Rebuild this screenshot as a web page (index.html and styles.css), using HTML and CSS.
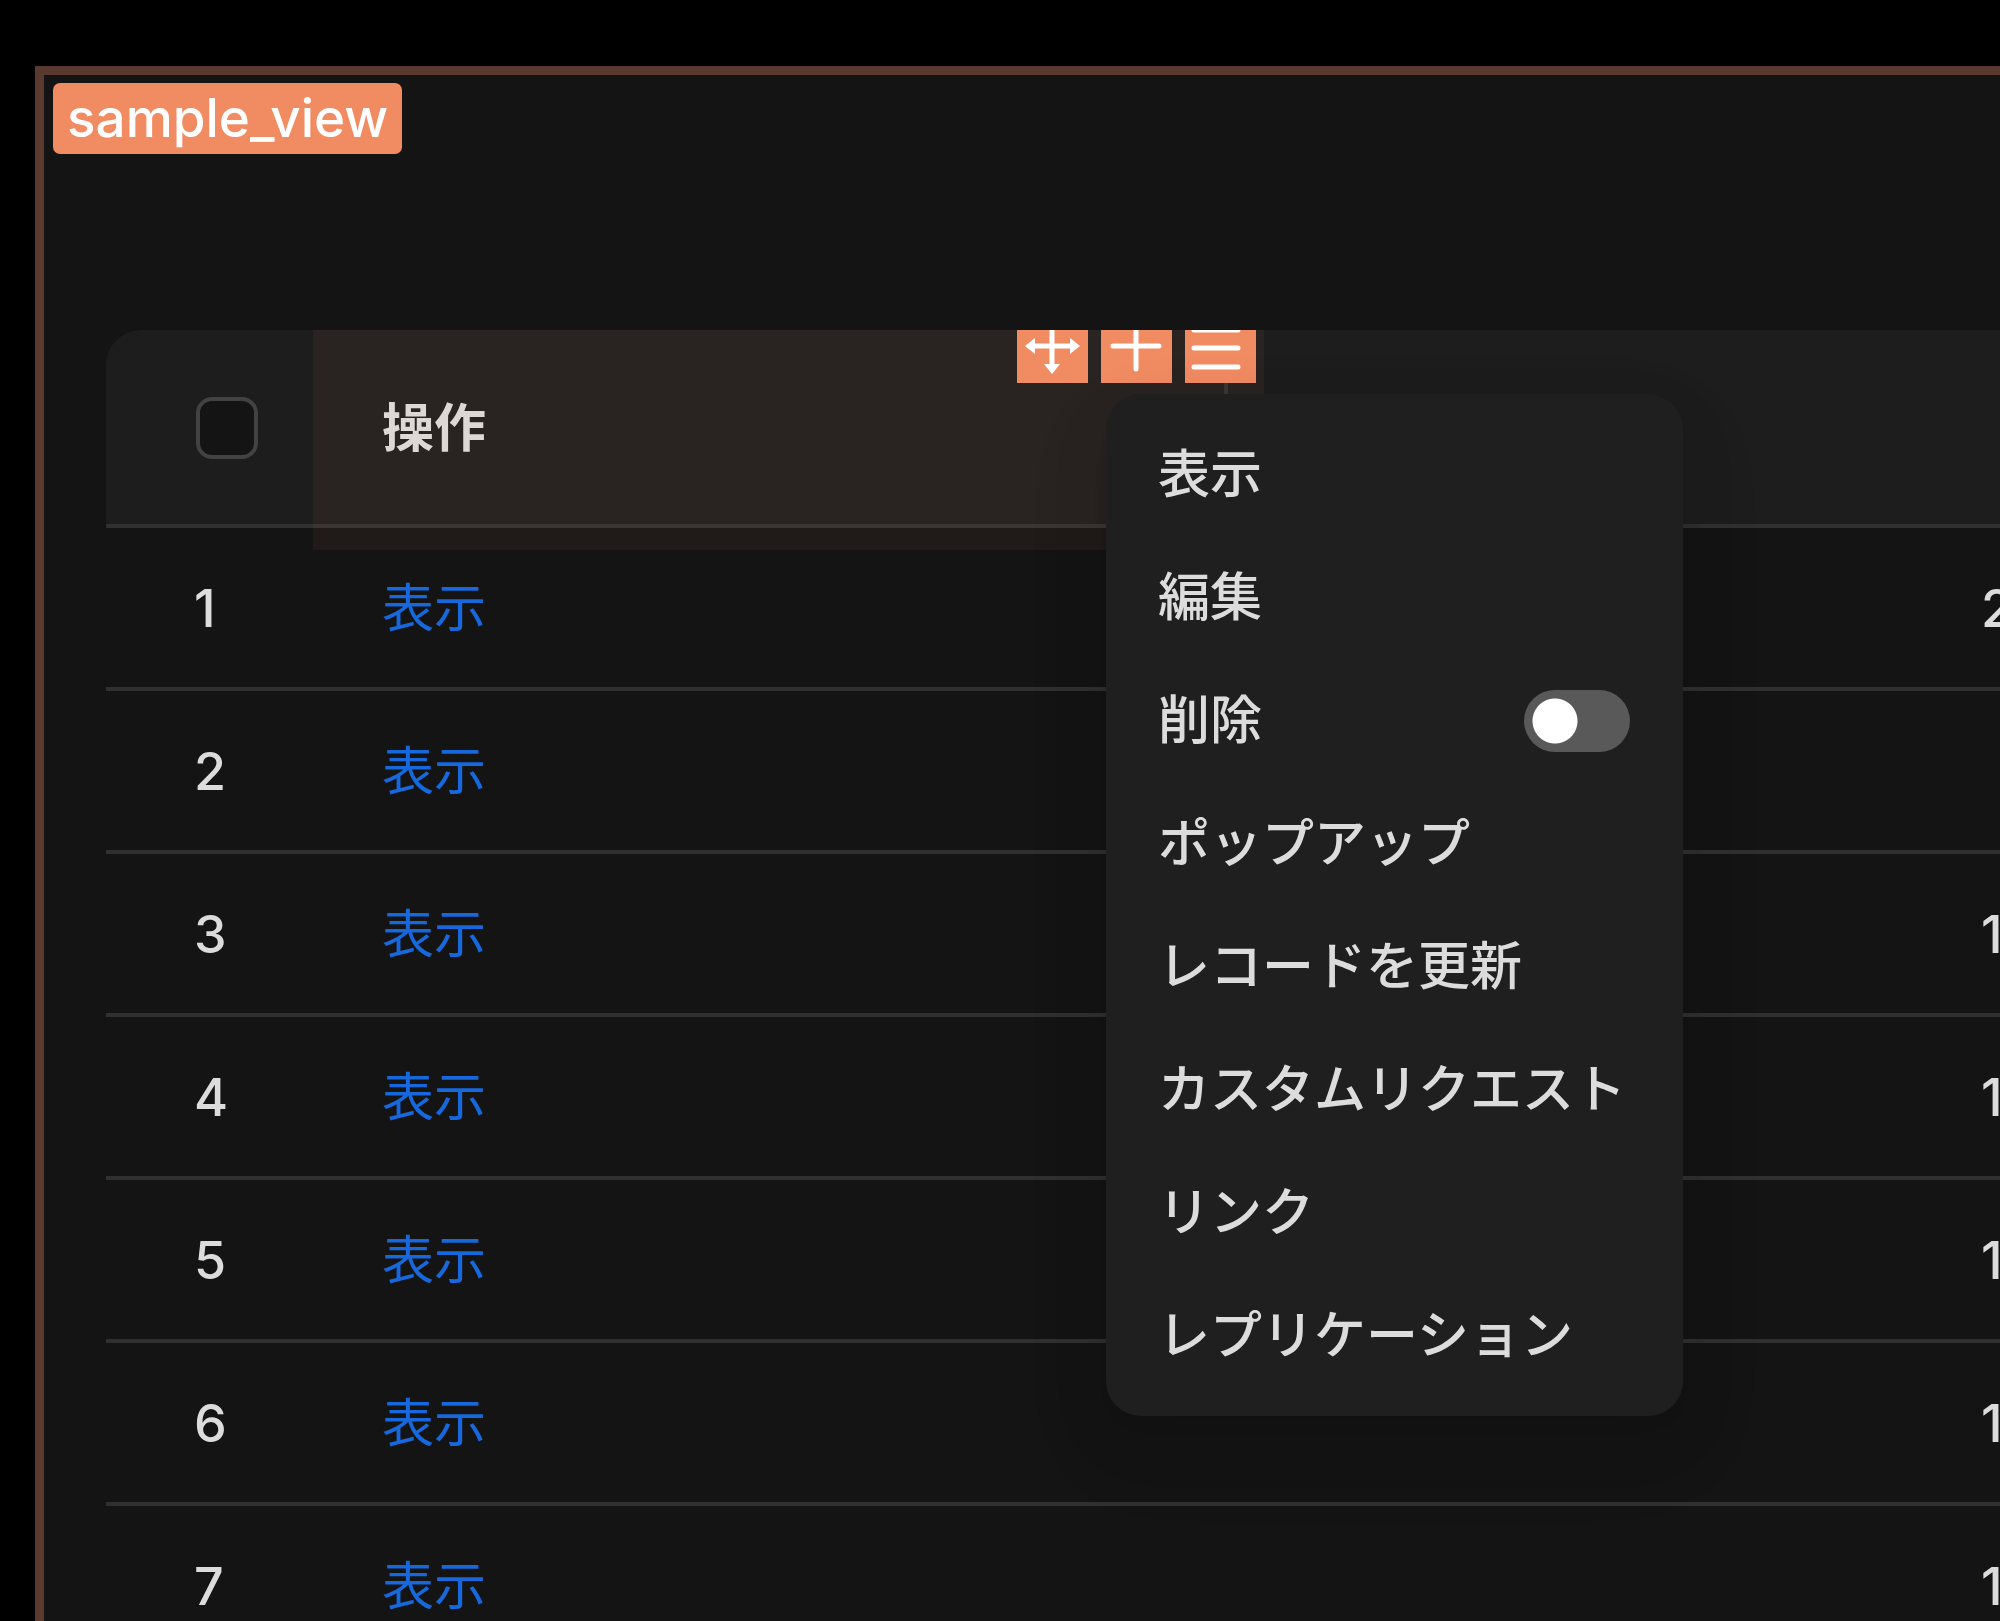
FILE: index.html
```html
<!DOCTYPE html>
<html lang="ja">
<head>
<meta charset="utf-8">
<title>sample_view</title>
<link rel="stylesheet" href="styles.css">
</head>
<body>
<main class="block">
  <span class="block-tag">sample_view</span>
  <div class="grid">
    <div class="grid-clip">
      <table class="table">
        <colgroup><col class="col-index"><col class="col-actions"><col class="col-wide"><col></colgroup>
        <thead>
          <tr>
            <th><input class="checkbox" type="checkbox" aria-label="すべて選択"></th>
            <th class="cell-actions">操作
              <div class="designer">
                <div class="toolbar">
                  <button class="tool" type="button" aria-label="移動">
                    <svg viewBox="0 0 71 71"><path d="M35 10V58M12 34H58" stroke-width="5"/><path class="fill" d="M8 34l10-8v16zM63 34l-10-8v16zM35 62l-8-10h16zM35 6l-8 10h16z"/></svg>
                  </button>
                  <button class="tool" type="button" aria-label="追加">
                    <svg viewBox="0 0 71 71"><path d="M35 11V57M12 34H58" stroke-width="5"/></svg>
                  </button>
                  <button class="tool" type="button" aria-label="メニュー">
                    <svg viewBox="0 0 71 71"><path d="M9 18H53M9 36H53M9 55H53" stroke-width="5"/></svg>
                  </button>
                </div>
              </div>
            </th>
            <th></th>
            <th></th>
          </tr>
        </thead>
        <tbody>
          <tr><td>1</td><td><a href="#">表示</a></td><td></td><td>2</td></tr>
          <tr><td>2</td><td><a href="#">表示</a></td><td></td><td></td></tr>
          <tr><td>3</td><td><a href="#">表示</a></td><td></td><td>1</td></tr>
          <tr><td>4</td><td><a href="#">表示</a></td><td></td><td>1</td></tr>
          <tr><td>5</td><td><a href="#">表示</a></td><td></td><td>1</td></tr>
          <tr><td>6</td><td><a href="#">表示</a></td><td></td><td>1</td></tr>
          <tr><td>7</td><td><a href="#">表示</a></td><td></td><td>1</td></tr>
        </tbody>
      </table>
    </div>
    <ul class="menu">
      <li><button class="menu-item" type="button">表示</button></li>
      <li><button class="menu-item" type="button">編集</button></li>
      <li><label class="menu-item" for="toggle-delete">削除<input class="switch" id="toggle-delete" type="checkbox" role="switch"></label></li>
      <li><button class="menu-item" type="button">ポップアップ</button></li>
      <li><button class="menu-item" type="button">レコードを更新</button></li>
      <li><button class="menu-item" type="button">カスタムリクエスト</button></li>
      <li><button class="menu-item" type="button">リンク</button></li>
      <li><button class="menu-item" type="button">レプリケーション</button></li>
    </ul>
  </div>
</main>
</body>
</html>
```

FILE: styles.css
```css
* {
  box-sizing: border-box;
}

body {
  margin: 0;
  height: 100vh;
  padding: 66px 0 0 35px;
  overflow: hidden;
  background: #000;
  color: #dcdcdc;
  font-family: Inter, "Noto Sans CJK JP", sans-serif;
  font-size: 52px;
  font-weight: 500;
  line-height: 71px;
}

.block {
  display: flex;
  flex-direction: column;
  min-height: 100%;
  padding: 8px 0 0 9px;
  border: solid #5a392e;
  border-width: 9px 0 0 9px;
  background: #141414;
}

.block-tag {
  align-self: flex-start;
  padding: 0 14px;
  border-radius: 7px;
  background: #f18b62;
  color: #fff;
  font-size: 53px;
}

.grid {
  position: relative;
  margin: 176px 0 0 53px;
}

.grid-clip {
  overflow: hidden;
  border-top-left-radius: 35px;
}

.table {
  width: 100%;
  table-layout: fixed;
  border-collapse: separate;
  border-spacing: 0;
}

.col-index {
  width: 207px;
}

.col-actions {
  width: 915px;
}

.col-wide {
  width: 684px;
}

.table th,
.table td {
  height: 163px;
  padding: 2px 0 0 69px;
  border-bottom: 4px solid #303030;
  text-align: left;
  vertical-align: middle;
}

.table th {
  height: 198px;
  background: #1d1d1d;
  font-weight: 700;
}

.table td:first-child {
  padding-left: 88px;
}

.table th:first-child {
  padding-left: 90px;
}

.table a {
  color: #1668dc;
  font-weight: 400;
  text-decoration: none;
}

.cell-actions {
  position: relative;
}

.cell-actions::after {
  content: "";
  position: absolute;
  top: 50px;
  right: 0;
  width: 4px;
  height: 94px;
  background: #303030;
}

.checkbox {
  appearance: none;
  display: block;
  width: 62px;
  height: 62px;
  margin: 0;
  border: 4px solid #424242;
  border-radius: 16px;
  background: #141414;
}

.designer {
  position: absolute;
  z-index: 1;
  inset: -18px -36px -26px 0;
  background: rgba(241, 139, 98, 0.06);
}

.toolbar {
  display: flex;
  justify-content: flex-end;
  gap: 13px;
  padding-right: 8px;
}

.tool {
  width: 71px;
  height: 71px;
  padding: 0;
  border: 0;
  background: #f18b62;
}

.tool svg {
  display: block;
  fill: none;
  stroke: #fff;
  stroke-linecap: round;
}

.tool .fill {
  fill: #fff;
  stroke: none;
}

.menu {
  position: absolute;
  z-index: 2;
  top: 64px;
  left: 1000px;
  width: 577px;
  margin: 0;
  padding: 19px 0;
  border-radius: 35px;
  background: #1f1f1f;
  box-shadow: 0 23px 62px rgba(0, 0, 0, 0.08), 0 12px 23px -15px rgba(0, 0, 0, 0.12), 0 34px 80px 16px rgba(0, 0, 0, 0.05);
  list-style: none;
}

.menu-item {
  display: flex;
  align-items: center;
  justify-content: space-between;
  width: 100%;
  height: 123px;
  padding: 0 53px 0 52px;
  border: 0;
  background: none;
  color: inherit;
  font: inherit;
  text-align: left;
  white-space: nowrap;
}

.switch {
  appearance: none;
  width: 106px;
  height: 62px;
  margin: 0;
  border-radius: 31px;
  background: radial-gradient(circle at 31px 31px, #fff 22px, #595959 23px);
}
```
